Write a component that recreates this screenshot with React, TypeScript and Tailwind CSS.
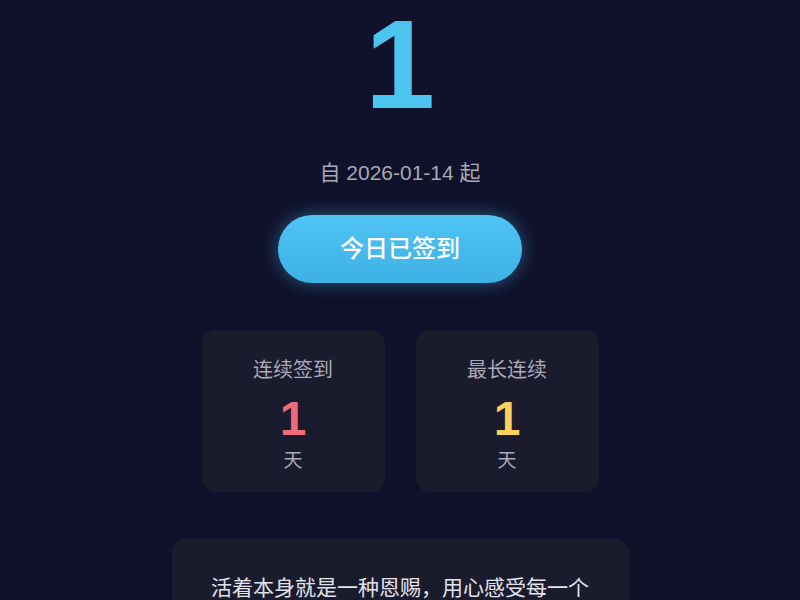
import React from "react";

const FONT = { fontFamily: '"Liberation Sans", "Noto Sans CJK SC", sans-serif' };

function StatCard({ label, value, color }: { label: string; value: number; color: string }) {
  return (
    <div className="flex h-[162px] w-[183px] shrink-0 flex-col items-center rounded-[14px] bg-[#1b1b2e] pt-[26px]">
      <div className="text-[20px] leading-[28px] text-[#a9a9b8]">{label}</div>
      <div className={`mt-[8px] text-[48px] font-bold leading-[54px] ${color}`}>{value}</div>
      <div className="mt-[2px] text-[19px] leading-[26px] text-[#a9a9b8]">天</div>
    </div>
  );
}

export default function App() {
  return (
    <div style={FONT} className="flex h-[600px] w-[800px] flex-col items-center overflow-hidden bg-[#10112a]">
      <div className="shrink-0 text-[126px] font-bold leading-[130px] text-[#4cc4f0]">1</div>
      <div className="mt-[29px] shrink-0 text-[21px] leading-[28px] text-[#a8a8b6]">自 2026-01-14 起</div>
      <button
        type="button"
        className="mt-[28px] h-[68px] w-[244px] shrink-0 rounded-full bg-gradient-to-b from-[#4fc3f2] to-[#3eb2e6] text-[24px] font-medium text-white shadow-[0_0_18px_rgba(70,185,235,0.45)]"
      >
        今日已签到
      </button>
      <div className="mt-[47px] flex shrink-0 gap-[31px]">
        <StatCard label="连续签到" value={1} color="text-[#f06a78]" />
        <StatCard label="最长连续" value={1} color="text-[#fcd05a]" />
      </div>
      <div className="mt-[47px] w-[457px] shrink-0 rounded-[14px] bg-[#1b1b2e] px-[37px] pt-[32px] pb-[30px] text-center text-[21px] leading-[34px] text-[#e2e2ea]">
        活着本身就是一种恩赐，用心感受每一个平凡的日子，都是生命的礼物。
      </div>
    </div>
  );
}
